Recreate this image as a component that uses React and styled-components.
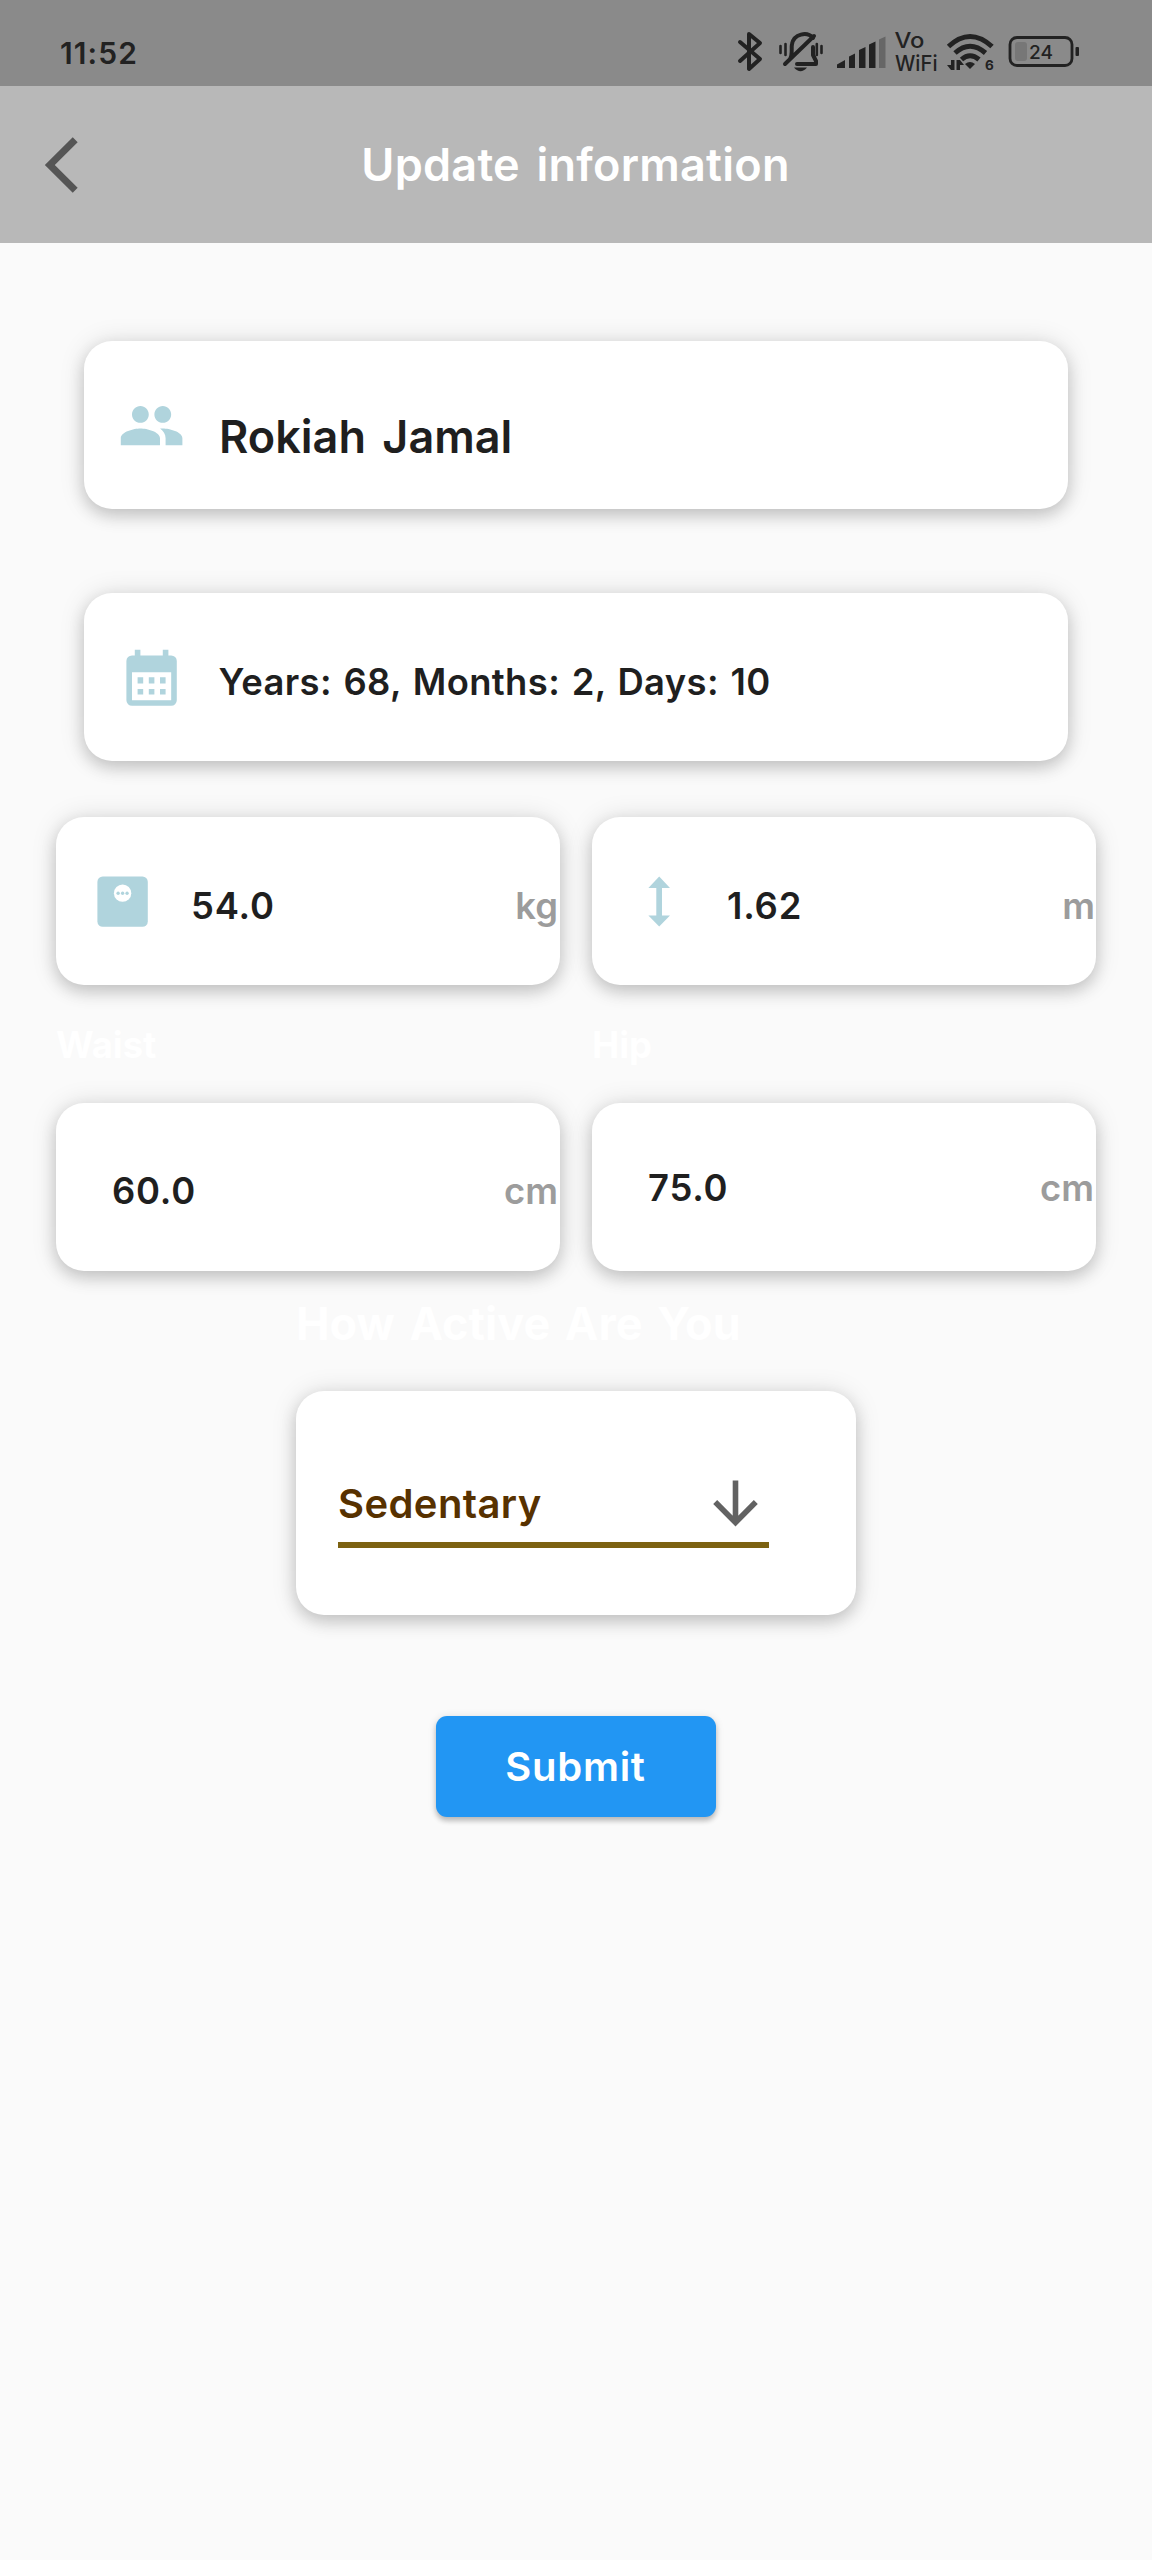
import React from "react";
import styled, { createGlobalStyle } from "styled-components";

const GlobalStyle = createGlobalStyle`
  * { box-sizing: border-box; }
  body { margin: 0; background: #fafafa; }
`;

const Screen = styled.div`
  width: 1152px;
  height: 2560px;
  overflow: hidden;
  background: #fafafa;
  font-family: Inter, Roboto, sans-serif;
  font-weight: 600;
  color: #1f1f1f;
`;

const StatusBar = styled.header`
  height: 86px;
  background: #8a8a8a;
  display: flex;
  align-items: flex-start;
  padding: 26px 68px 0 60px;
`;

const Clock = styled.time`
  font-size: 30px;
  line-height: 54px;
  letter-spacing: 1.1px;
  flex: 1;
  color: #222;
`;

const StatusIcons = styled.svg`
  width: 352px;
  height: 50px;
  flex: none;
  font-family: Inter, sans-serif;
`;

const AppBar = styled.div`
  height: 157px;
  background: #b8b8b8;
  display: grid;
  grid-template-columns: 112px 1fr 112px;
  align-items: center;
`;

const BackButton = styled.button`
  border: 0;
  background: none;
  padding: 0 0 0 44px;
  height: 60px;
  display: flex;
`;

const Title = styled.h1`
  margin: 0;
  padding-right: 1px;
  text-align: center;
  font-size: 45px;
  line-height: 56px;
  font-weight: 600;
  letter-spacing: 0.25px;
  word-spacing: 5px;
  color: #fff;
`;

const Form = styled.form`
  padding: 98px 56px 0;
  display: flex;
  flex-direction: column;
`;

const Card = styled.div`
  height: 168px;
  background: #fff;
  border-radius: 28px;
  box-shadow: 0 7px 16px rgba(0, 0, 0, 0.16), 0 1px 26px rgba(0, 0, 0, 0.13);
  display: flex;
  align-items: flex-start;
  padding-top: ${(p) => p.$top || 0}px;
  padding-left: ${(p) => p.$left || 33}px;
`;

const WideCards = styled.div`
  display: flex;
  flex-direction: column;
  gap: 84px;
  padding: 0 28px;
`;

const PairRow = styled.div`
  display: grid;
  grid-template-columns: 504px 504px;
  gap: 32px;
  margin-top: ${(p) => p.$gap}px;
`;

const IconSlot = styled.span`
  width: ${(p) => p.$width}px;
  flex: none;
  display: flex;
`;

const Value = styled.span`
  flex: 1;
  font-size: ${(p) => p.$size || 36.4}px;
  line-height: 60px;
  letter-spacing: ${(p) => p.$track ?? 0.8}px;
  word-spacing: ${(p) => p.$words || 0}px;
  padding-top: ${(p) => p.$drop || 0}px;
  white-space: nowrap;
`;

const Unit = styled.span`
  font-size: 36.4px;
  line-height: 60px;
  letter-spacing: 0;
  color: #9c9c9c;
  padding-top: ${(p) => p.$drop || 0}px;
  padding-right: ${(p) => p.$pad ?? 2}px;
`;

const Label = styled.span`
  font-size: 36.4px;
  line-height: 44px;
  font-weight: 700;
  letter-spacing: 0;
  color: #fff;
`;

const Heading = styled.h2`
  margin: 31px 0 0 240px;
  font-size: 45px;
  line-height: 44px;
  font-weight: 700;
  letter-spacing: 0;
  word-spacing: 4px;
  color: #fff;
`;

const ActivityCard = styled(Card)`
  width: 560px;
  height: 224px;
  margin: 45px 0 0 240px;
  padding: 81px 86px 0 42px;
`;

const Select = styled.div`
  width: 431px;
  height: 76px;
  border-bottom: 6px solid #7c6211;
  display: flex;
  padding-right: 10px;
  color: #573100;
`;

const Submit = styled.button`
  align-self: center;
  width: 280px;
  height: 101px;
  margin-top: 101px;
  border: 0;
  border-radius: 11px;
  background: #2296f3;
  color: #fff;
  font: 600 40px/56px Inter, sans-serif;
  letter-spacing: 0.7px;
  padding: 0 7px 0 6px;
  box-shadow: 0 4px 5px rgba(0, 0, 0, 0.2), 0 1px 8px rgba(0, 0, 0, 0.12);
`;

const tint = "#b0d4dd";

const PeopleIcon = () => (
  <svg width="67.2" height="67.2" viewBox="0 0 24 24" fill={tint}>
    <path d="M16 11c1.66 0 2.99-1.34 2.99-3S17.66 5 16 5s-3 1.34-3 3 1.34 3 3 3zm-8 0c1.66 0 2.99-1.34 2.99-3S9.66 5 8 5 5 6.34 5 8s1.34 3 3 3zm0 2c-2.33 0-7 1.17-7 3.5V19h14v-2.500c0-2.330-4.670-3.500-7-3.500zm8 0c-.29 0-.62.020-.970.050 1.160.840 1.970 1.970 1.970 3.450V19h6v-2.500c0-2.330-4.670-3.500-7-3.500z" />
  </svg>
);

const CalendarIcon = () => (
  <svg width="67.2" height="67.2" viewBox="0 0 24 24" fill={tint}>
    <path d="M9 10.800v2.200H7v-2.200h2m4 0v2.200h-2v-2.200h2m4 0v2.200h-2v-2.200h2m2-7.800a2 2 0 0 1 2 2v14a2 2 0 0 1-2 2H5a2 2 0 0 1-2-2V5a2 2 0 0 1 2-2h1V1h2v2h8V1h2v2h1m0 16V9H5v10h14M9 15v2H7v-2h2m4 0v2h-2v-2h2m4 0v2h-2v-2h2z" />
  </svg>
);

const ScaleIcon = () => (
  <svg width="67.2" height="67.2" viewBox="0 0 24 24" fill={tint}>
    <rect x="3" y="3" width="18" height="18" rx="1.9" />
    <circle cx="12" cy="9" r="3.100" fill="#fff" />
    <circle cx="10.4" cy="9" r=".6" />
    <circle cx="12" cy="9" r=".6" />
    <circle cx="13.6" cy="9" r=".6" />
  </svg>
);

const HeightIcon = () => (
  <svg width="67.2" height="67.2" viewBox="0 0 67.2 67.200" fill={tint}>
    <path d="M34.200 8.500L45 20H37V47.600H45L34.200 58.600L23.400 47.600H31.300V20H23.400Z" />
  </svg>
);

const BackIcon = () => (
  <svg width="35" height="60" viewBox="0 0 35 60" fill="none" stroke="#555" strokeWidth="7">
    <path d="M31.200 4.800L5.800 30L31.200 55.200" />
  </svg>
);

const DownIcon = () => (
  <svg width="48" height="60" viewBox="0 0 48 60" fill="none" stroke="#626262" strokeWidth="5.600">
    <path d="M24.500 8.500V49M4.200 30L24.500 50.500L44.800 30" />
  </svg>
);

const Signals = () => (
  <StatusIcons viewBox="732 26 352 50" fill="#222" stroke="none">
    <g fill="none" stroke="#222" strokeWidth="4" strokeLinejoin="round" strokeLinecap="round">
      <path d="M740 42L760 59L749 69V34L760 43L740 61" />
      <path d="M790 59C793 54 791 48 792 44C794 34 807 31 813 38M813 47V55L816 61V64H797M814 36L785 64" />
      <path d="M780.500 46V53M785.500 44V55M816.800 44V55M821.500 46V53" strokeWidth="2.600" />
    </g>
    <path d="M794 67.500H807Q800.500 75 794 67.500Z" />
    <path d="M837 68V64.500L845 60V68ZM849 68V56.500L855 53.500V68ZM859 68V50L865.500 47V68ZM869 68V44.500L875.500 41.500V68Z" />
    <path d="M879 68V39.500L885.500 36.500V68Z" fill="#666" />
    <text x="894.500" y="48" fontSize="21" fontWeight="500" textLength="30" lengthAdjust="spacingAndGlyphs">Vo</text>
    <text x="895" y="70.500" fontSize="21" fontWeight="500" textLength="42.500" lengthAdjust="spacingAndGlyphs">WiFi</text>
    <g fill="none" stroke="#222" strokeWidth="5">
      <path d="M948.500 46.500Q970 26.500 992 46.500" />
      <path d="M955 53Q970 39.500 985.500 53" />
      <path d="M961.500 59.500Q970 52 979 59.500" />
    </g>
    <path d="M965 64Q970 60 975 64L970 69Z" />
    <path d="M954.500 60V70H951L947 65H951V60ZM956.500 70V60H960L964 65H960V70Z" />
    <text x="985" y="69.500" fontSize="13.500" fontWeight="700">6</text>
    <rect x="1010" y="37.500" width="62" height="28" rx="7" fill="none" stroke="#222" strokeWidth="2.800" />
    <rect x="1015" y="42" width="12" height="19" rx="3" fill="#777" />
    <text x="1029" y="58.500" fontSize="18.500" fontWeight="500" textLength="24" lengthAdjust="spacingAndGlyphs">24</text>
    <rect x="1075.500" y="47" width="3.500" height="9" rx="1" />
  </StatusIcons>
);

export default function App() {
  return (
    <>
      <GlobalStyle />
      <Screen>
        <StatusBar>
          <Clock>11:52</Clock>
          <Signals />
        </StatusBar>
        <AppBar>
          <BackButton type="button" aria-label="Back"><BackIcon /></BackButton>
          <Title>Update information</Title>
        </AppBar>
        <Form>
          <WideCards>
            <Card $top={51} $left={34}>
              <IconSlot $width={101}><PeopleIcon /></IconSlot>
              <Value $size={45} $track={0} $words={5} $drop={15}>Rokiah Jamal</Value>
            </Card>
            <Card $top={54} $left={33.5}>
              <IconSlot $width={101}><CalendarIcon /></IconSlot>
              <Value $track={0.37} $words={2} $drop={5}>Years: 68, Months: 2, Days: 10</Value>
            </Card>
          </WideCards>
          <PairRow $gap={56}>
            <Card $top={51}>
              <IconSlot $width={102}><ScaleIcon /></IconSlot>
              <Value $drop={7.5}>54.0</Value>
              <Unit $drop={7.5}>kg</Unit>
            </Card>
            <Card $top={51}>
              <IconSlot $width={102}><HeightIcon /></IconSlot>
              <Value $drop={7.5}>1.62</Value>
              <Unit $drop={7.5} $pad={1}>m</Unit>
            </Card>
          </PairRow>
          <PairRow $gap={38}>
            <Label>Waist</Label>
            <Label>Hip</Label>
          </PairRow>
          <PairRow $gap={36}>
            <Card $top={58} $left={56}>
              <Value>60.0</Value>
              <Unit>cm</Unit>
            </Card>
            <Card $top={55} $left={56}>
              <Value>75.0</Value>
              <Unit $pad={2}>cm</Unit>
            </Card>
          </PairRow>
          <Heading>How Active Are You</Heading>
          <ActivityCard>
            <Select>
              <Value $size={40} $track={0.4} $drop={2}>Sedentary</Value>
              <DownIcon />
            </Select>
          </ActivityCard>
          <Submit type="button">Submit</Submit>
        </Form>
      </Screen>
    </>
  );
}
